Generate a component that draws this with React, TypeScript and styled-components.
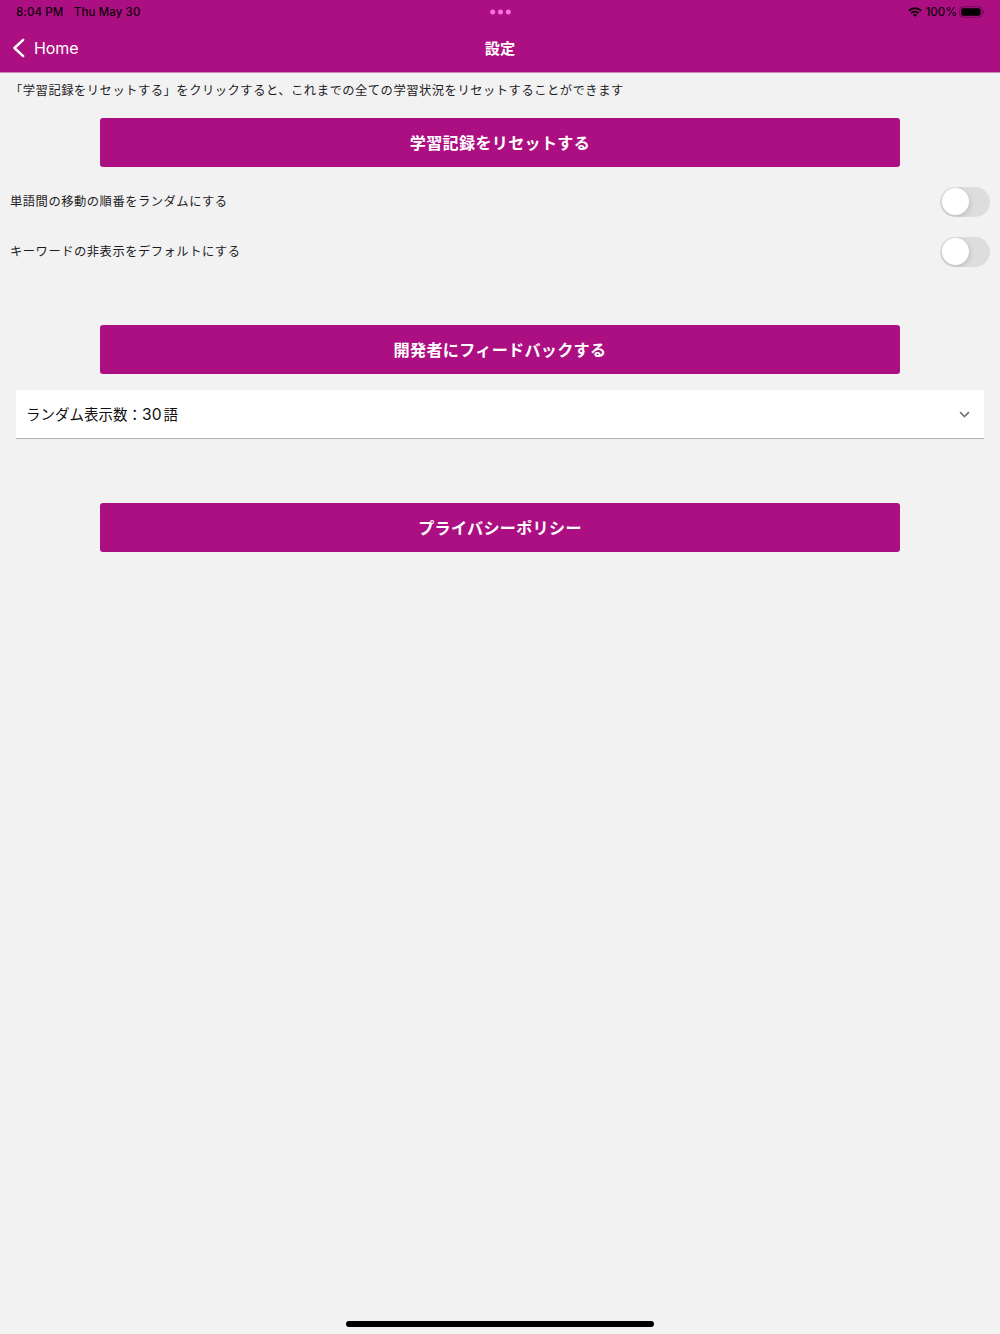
import React, { useState } from "react";
import styled, { createGlobalStyle } from "styled-components";

const jp = `"Noto Sans CJK JP", sans-serif`;
const latin = `Inter, "Noto Sans CJK JP", sans-serif`;
const brand = "#ac0f82";

const GlobalStyle = createGlobalStyle`
  * { box-sizing: border-box; }
  body { margin: 0; background: #f2f2f2; font-family: ${jp}; color: #1c1c1e; }
`;

const Button = styled.button`
  margin: 0;
  padding: 0;
  border: 0;
  cursor: pointer;
`;

const Screen = styled.div`
  display: flex;
  flex-direction: column;
  height: 1334px;
  overflow: hidden;
  background: #f2f2f2;
`;

const Top = styled.header`
  height: 72px;
  box-sizing: content-box;
  border-bottom: 1px solid #c98bb9;
  background: ${brand};
`;

const StatusBar = styled.div`
  display: grid;
  grid-template-columns: 1fr auto 1fr;
  align-items: center;
  height: 24px;
  padding: 0 15px 0 16px;
  font: 500 11.5px/24px ${latin};
  color: #0c0009;
`;

const Clock = styled.div`
  display: flex;
  gap: 10.5px;
  letter-spacing: 0.1px;
`;

const DotsIcon = styled.svg`
  display: block;
  margin-right: 1px;
`;

const Indicators = styled.div`
  display: flex;
  align-items: center;
  justify-content: flex-end;
`;

const Percent = styled.span`
  margin: 0 2px 0 3.5px;
  font-size: 11.7px;
`;

const NavBar = styled.div`
  display: grid;
  grid-template-columns: 1fr auto 1fr;
  align-items: center;
  height: 48px;
  color: #fff;
`;

const Back = styled(Button)`
  display: flex;
  align-items: center;
  justify-self: start;
  gap: 9px;
  padding-left: 12px;
  background: none;
  color: #fff;
  font: 400 16px/24px ${latin};
  letter-spacing: -0.08px;
`;

const Title = styled.h1`
  margin: 0 0 2px;
  font: 700 15.2px/24px ${jp};
`;

const Note = styled.p`
  margin: 8px 10px 18px;
  font-size: 12.3px;
  line-height: 19px;
  letter-spacing: 0.5px;
`;

const Action = styled(Button)<{ $bottom: number }>`
  width: 800px;
  height: 49px;
  flex: none;
  align-self: center;
  margin-bottom: ${(p) => p.$bottom}px;
  border-radius: 3px;
  background: ${brand};
  color: #fff;
  font: 700 16.1px/49px ${jp};
  letter-spacing: 0.3px;
`;

const Row = styled.div`
  display: flex;
  align-items: center;
  justify-content: space-between;
  height: 50px;
  padding: 0 10px;
  font-size: 12.3px;
  letter-spacing: 0.5px;
`;

const Track = styled(Button)<{ $on: boolean }>`
  display: flex;
  align-items: center;
  justify-content: ${(p) => (p.$on ? "flex-end" : "flex-start")};
  width: 50px;
  height: 30.5px;
  margin-top: 1.5px;
  padding: 2px;
  border-radius: 16px;
  overflow: hidden;
  background: ${(p) => (p.$on ? brand : "#dddddf")};
`;

const Knob = styled.span`
  width: 27px;
  height: 27px;
  border-radius: 50%;
  background: #fff;
  box-shadow: 1px 2px 5px rgba(0, 0, 0, 0.14);
`;

const Select = styled(Button)`
  display: flex;
  align-items: center;
  justify-content: space-between;
  flex: none;
  height: 49px;
  margin: 0 16px 64px;
  padding: 1px 14px 0 10px;
  border-bottom: 1px solid #b4b4b6;
  background: #fff;
  color: #111;
  font: 400 14.5px/24px ${latin};
`;

const Count = styled.span`
  font-size: 15.6px;
  margin-right: 2px;
`;

const HomeIndicator = styled.div`
  width: 308px;
  height: 6px;
  margin: auto auto 7px;
  border-radius: 3px;
  background: #000;
`;

function MultitaskDots() {
  return (
    <DotsIcon width="22" height="6" viewBox="0 0 22 6" fill="#ff70df">
      <circle cx="3.7" cy="3" r="2.5" />
      <circle cx="11.5" cy="3" r="2.5" />
      <circle cx="19.3" cy="3" r="2.5" />
    </DotsIcon>
  );
}

function WifiIcon() {
  return (
    <svg width="14" height="10" viewBox="0 0 14 10" fill="none" stroke="currentColor" strokeWidth="1.9">
      <path d="M.9 3.7C4.3.45 9.7.45 13.1 3.7" />
      <path d="M3.2 6.1C5.3 4.1 8.7 4.1 10.8 6.1" />
      <path d="M7 9.8 4.9 7.7a3 3 0 0 1 4.2 0z" fill="currentColor" stroke="none" />
    </svg>
  );
}

function BatteryIcon() {
  return (
    <svg width="26" height="12" viewBox="0 0 26 12" fill="none">
      <rect x=".7" y=".7" width="22.4" height="10.6" rx="3.2" stroke="#000" strokeOpacity=".38" strokeWidth=".9" />
      <rect x="2.2" y="2.2" width="19.4" height="7.6" rx="1.9" fill="#000" />
      <path d="M24.2 4.3c.8.4 1.1 1 1.1 1.7s-.3 1.3-1.1 1.7z" fill="#000" fillOpacity=".45" />
    </svg>
  );
}

function BackIcon() {
  return (
    <svg width="13" height="20" viewBox="0 0 13 20" fill="none">
      <path d="M11.2 1.8 2.4 10l8.8 8.2" stroke="#fff" strokeWidth="2.4" strokeLinecap="round" strokeLinejoin="round" />
    </svg>
  );
}

function ChevronDown() {
  return (
    <svg width="11" height="7" viewBox="0 0 11 7" fill="none">
      <path d="m1.1 1.2 4.4 4.3 4.4-4.3" stroke="#777" strokeWidth="1.7" />
    </svg>
  );
}

function SettingRow({ label }: { label: string }) {
  const [on, setOn] = useState(false);
  return (
    <Row>
      <span>{label}</span>
      <Track $on={on} role="switch" aria-checked={on} aria-label={label} onClick={() => setOn(!on)}>
        <Knob />
      </Track>
    </Row>
  );
}

const Settings = styled.section`
  margin: 9px 0 49px;
`;

export default function App() {
  return (
    <>
      <GlobalStyle />
      <Screen>
        <Top>
          <StatusBar>
            <Clock>
              <span>8:04 PM</span>
              <span>Thu May 30</span>
            </Clock>
            <MultitaskDots />
            <Indicators>
              <WifiIcon />
              <Percent>100%</Percent>
              <BatteryIcon />
            </Indicators>
          </StatusBar>
          <NavBar>
            <Back>
              <BackIcon />
              Home
            </Back>
            <Title>設定</Title>
          </NavBar>
        </Top>
        <Note>「学習記録をリセットする」をクリックすると、これまでの全ての学習状況をリセットすることができます</Note>
        <Action $bottom={0}>学習記録をリセットする</Action>
        <Settings>
          <SettingRow label="単語間の移動の順番をランダムにする" />
          <SettingRow label="キーワードの非表示をデフォルトにする" />
        </Settings>
        <Action $bottom={16}>開発者にフィードバックする</Action>
        <Select>
          <span>
            ランダム表示数：<Count>30</Count>語
          </span>
          <ChevronDown />
        </Select>
        <Action $bottom={0}>プライバシーポリシー</Action>
        <HomeIndicator />
      </Screen>
    </>
  );
}
